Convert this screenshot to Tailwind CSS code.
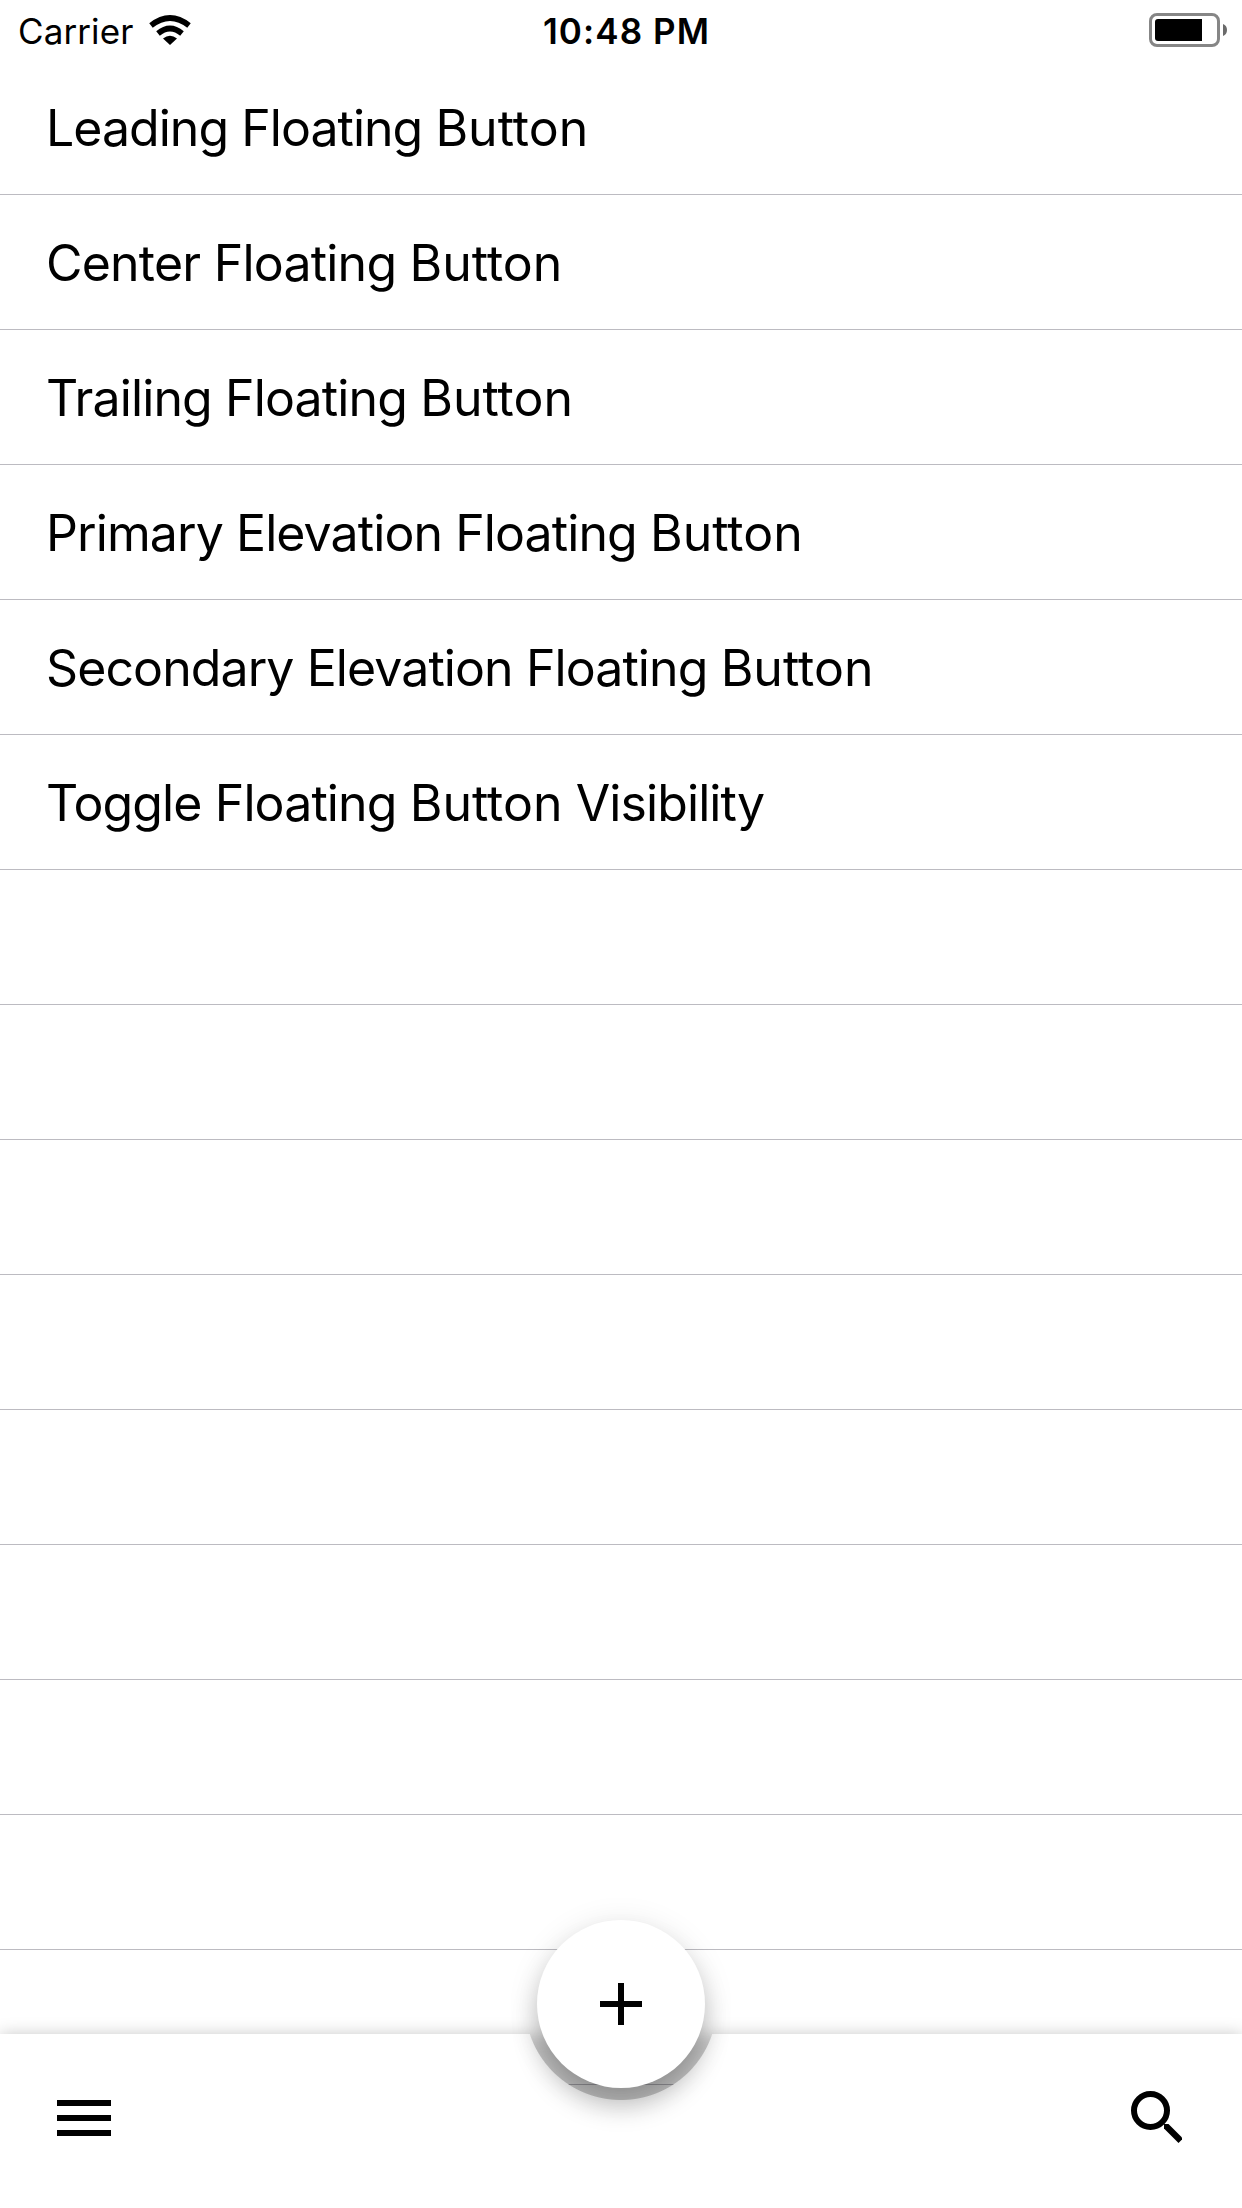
<!DOCTYPE html>
<html lang="en">
<head>
<meta charset="utf-8">
<title>Bottom App Bar</title>
<script src="https://cdn.jsdelivr.net/npm/@tailwindcss/browser@4"></script>
</head>
<body class="bg-white">
<main class="relative flex h-[2208px] w-[1242px] flex-col overflow-hidden bg-white font-[Inter,sans-serif] text-black">
  <header class="grid h-[60px] shrink-0 grid-cols-3 items-center pl-[18px] pr-[15px]">
    <div class="flex items-center gap-4">
      <span class="pt-[3px] text-[35px] leading-none tracking-[0.1px]">Carrier</span>
      <svg class="h-[30px] w-[42px]" viewBox="0 0 42 30" fill="none" stroke="#000" stroke-width="5.6"><path d="M2 10.500Q21 -4.500 40 10.500"/><path d="M9 18.500Q21 8.500 33 18.500"/><path d="M14 23.500Q21 18 28 23.500L21 30Z" fill="#000" stroke="none"/></svg>
    </div>
    <span class="pl-[8px] pt-[3px] text-center text-[35px] font-semibold leading-none tracking-[1.1px]">10:48 PM</span>
    <svg class="h-[34px] w-[78px] justify-self-end" viewBox="0 0 78 34"><rect x="1.500" y="1.500" width="68" height="31" rx="6.500" fill="none" stroke="#868686" stroke-width="3"/><path d="M9 6h44v22H9a3 3 0 0 1-3-3V9a3 3 0 0 1 3-3z"/><path d="M74 11q4 1.500 4 6t-4 6z" fill="#6b6b6b"/></svg>
  </header>

  <ul class="flex flex-col text-[50px] leading-[60px] [&>li]:h-[135px] [&>li]:shrink-0 [&>li]:border-b [&>li]:border-[#bcbbc1] [&>li]:pl-[46px] [&>li]:pt-[38px]">
    <li class="tracking-[-0.97px]">Leading Floating <span class="tracking-normal">Button</span></li>
    <li class="tracking-[-0.78px]">Center Floating <span class="tracking-normal">Button</span></li>
    <li class="tracking-[-0.87px]">Trailing Floating <span class="tracking-normal">Button</span></li>
    <li class="tracking-[-0.91px]">Primary Elevation Floating <span class="tracking-normal">Button</span></li>
    <li class="tracking-[-0.91px]">Secondary Elevation Floating <span class="tracking-normal">Button</span></li>
    <li class="tracking-[-0.89px]">Toggle Floating <span class="tracking-normal">Button</span> Visibility</li>
    <li></li><li></li><li></li><li></li><li></li><li></li><li></li><li></li><li></li>
  </ul>

  <!-- bottom bar with the round cut-out for the floating button -->
  <nav class="absolute inset-x-0 bottom-0 h-[174px]">
    <div class="absolute inset-0 bg-black/21 blur-[8px]"></div>
    <div class="absolute inset-0 flex items-start justify-between bg-white pl-[57px] pr-[60px] pt-[57px] [mask-image:radial-gradient(circle_96px_at_621px_-30px,transparent_95.5px,black_96.5px)]">
      <svg class="mt-[9px] h-[36px] w-[54px]" viewBox="0 0 54 36"><path d="M0 0h54v6H0zM0 15h54v6H0zM0 30h54v6H0z"/></svg>
      <svg class="h-[52px] w-[51px]" viewBox="0 0 51 52"><circle cx="19.500" cy="19.500" r="16.500" fill="none" stroke="#000" stroke-width="6"/><path d="M33 33h4.500L52 47.500 47.500 52 33 37.500z"/></svg>
    </div>
  </nav>
  <button class="absolute left-[537px] top-[1920px] flex size-[168px] items-center justify-center rounded-full bg-white shadow-[0_19px_26px_rgba(0,0,0,0.22),0_4px_32px_rgba(0,0,0,0.10)]" aria-label="Add">
    <svg class="size-[42px]" viewBox="0 0 42 42"><path d="M18 0h6v18h18v6H24v18h-6V24H0v-6h18z"/></svg>
  </button>
</main>
</body>
</html>
